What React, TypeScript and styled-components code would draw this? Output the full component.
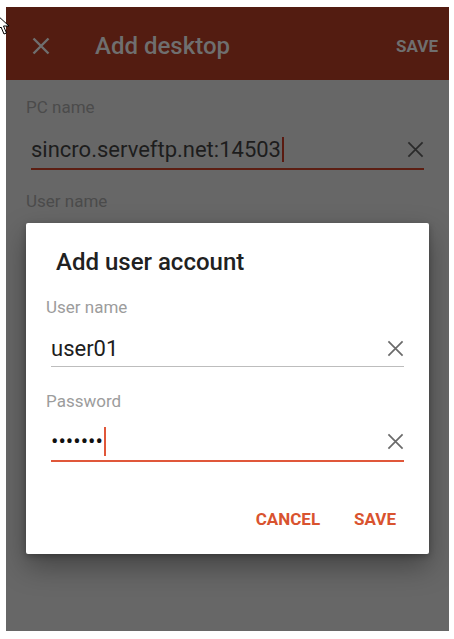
import styled, { createGlobalStyle } from "styled-components";

const GlobalStyle = createGlobalStyle`
    html, body {
        margin: 0;
        background: #ffffff;
        font-family: Roboto, "Liberation Sans", sans-serif;
    }
`;

const Device = styled.div`
    position: relative;
    margin: 7px 0 0 6px;
    width: 443px;
    height: 624px;
    background: #676767;
    overflow: hidden;
    display: flex;
    flex-direction: column;
`;

const AppBar = styled.div`
    height: 73px;
    flex-shrink: 0;
    background: #531c11;
    display: flex;
    align-items: center;
    padding: 4px 11px 0 26px;
    box-sizing: border-box;
`;

const AppTitle = styled.div`
    margin-left: 45px;
    flex: 1;
    font-size: 24px;
    font-weight: 500;
    color: #6f6f6f;
`;

const AppAction = styled.div`
    font-size: 17px;
    font-weight: 700;
    color: #6f6f6f;
`;

const Form = styled.div`
    padding: 17px 25px 0 20px;
    display: flex;
    flex-direction: column;
`;

const Label = styled.div<{ $tone: "dim" | "light"; $gap: number }>`
    margin-top: ${(p) => p.$gap}px;
    font-size: 17px;
    line-height: 20px;
    color: ${(p) => (p.$tone === "dim" ? "#4b4b4b" : "#9c9c9c")};
`;

const Field = styled.div<{ $line: string; $thick?: boolean; $height: number }>`
    display: flex;
    align-items: flex-end;
    margin-left: 5px;
    height: ${(p) => p.$height}px;
    box-sizing: border-box;
    padding-bottom: ${(p) => (p.$thick ? 6 : 5)}px;
    border-bottom: ${(p) => (p.$thick ? 2 : 1)}px solid ${(p) => p.$line};
`;

const Value = styled.div<{ $color: string }>`
    flex: 1;
    height: 26px;
    display: flex;
    align-items: center;
    font-size: 22px;
    color: ${(p) => p.$color};
`;

const IconBox = styled.div`
    height: 26px;
    display: flex;
    align-items: center;
`;

const Caret = styled.span<{ $color: string; $tall: number }>`
    display: inline-block;
    flex-shrink: 0;
    width: 2px;
    height: ${(p) => p.$tall}px;
    margin-left: 1px;
    background: ${(p) => p.$color};
`;

const Dots = styled.span`
    font-size: 22px;
    color: #111;
`;

const Overlay = styled.div`
    position: absolute;
    inset: 0;
    padding: 216px 20px 0;
`;

const Dialog = styled.div`
    height: 331px;
    background: #ffffff;
    border-radius: 2px;
    box-shadow: 0 12px 28px rgba(0, 0, 0, 0.35), 0 2px 6px rgba(0, 0, 0, 0.25);
    padding: 25px 25px 0 20px;
    box-sizing: border-box;
    display: flex;
    flex-direction: column;
`;

const DialogTitle = styled.div`
    margin-left: 10px;
    font-size: 24px;
    line-height: 28px;
    font-weight: 500;
    color: #212121;
`;

const Actions = styled.div`
    display: flex;
    justify-content: flex-end;
    gap: 34px;
    margin-top: 47px;
    padding-right: 8px;
`;

const ActionButton = styled.div`
    font-size: 17px;
    line-height: 20px;
    font-weight: 700;
    color: #d9532f;
`;

const Cursor = styled.svg`
    position: absolute;
    left: -4px;
    top: 14px;
`;

const CloseIcon = ({ size, color, weight }: { size: number; color: string; weight: number }) => (
    <svg width={size} height={size} viewBox="0 0 18 18">
        <path d="M1.5 1.5 L16.5 16.5 M16.5 1.5 L1.5 16.5" stroke={color} strokeWidth={weight} />
    </svg>
);

const App = () => (
    <>
        <GlobalStyle />
        <Device>
            <AppBar>
                <CloseIcon size={18} color="#6f6f6f" weight={2.4} />
                <AppTitle>Add desktop</AppTitle>
                <AppAction>SAVE</AppAction>
            </AppBar>
            <Form>
                <Label $tone="dim" $gap={0}>PC name</Label>
                <Field $line="#5c1e12" $thick $height={53}>
                    <Value $color="#1d1d1d">
                        sincro.serveftp.net:14503
                        <Caret $color="#5a1a10" $tall={25} />
                    </Value>
                    <IconBox>
                        <CloseIcon size={17} color="#2a2a2a" weight={1.8} />
                    </IconBox>
                </Field>
                <Label $tone="dim" $gap={21}>User name</Label>
            </Form>
            <Overlay>
                <Dialog>
                    <DialogTitle>Add user account</DialogTitle>
                    <Label $tone="light" $gap={21}>User name</Label>
                    <Field $line="#bdbdbd" $height={50}>
                        <Value $color="#1d1d1d">user01</Value>
                        <IconBox>
                            <CloseIcon size={17} color="#6a6a6a" weight={1.8} />
                        </IconBox>
                    </Field>
                    <Label $tone="light" $gap={24}>Password</Label>
                    <Field $line="#e0573a" $thick $height={51}>
                        <Value $color="#1d1d1d">
                            <Dots>•••••••</Dots>
                            <Caret $color="#e0573a" $tall={29} />
                        </Value>
                        <IconBox>
                            <CloseIcon size={17} color="#6a6a6a" weight={1.8} />
                        </IconBox>
                    </Field>
                    <Actions>
                        <ActionButton>CANCEL</ActionButton>
                        <ActionButton>SAVE</ActionButton>
                    </Actions>
                </Dialog>
            </Overlay>
        </Device>
        <Cursor width="14" height="22" viewBox="0 0 14 22">
            <path d="M1 1 L1 17 L5 13 L8 20 L10.5 19 L7.5 12 L13 12 Z" fill="#fff" stroke="#000" strokeWidth="1" />
        </Cursor>
    </>
);

export default App;
